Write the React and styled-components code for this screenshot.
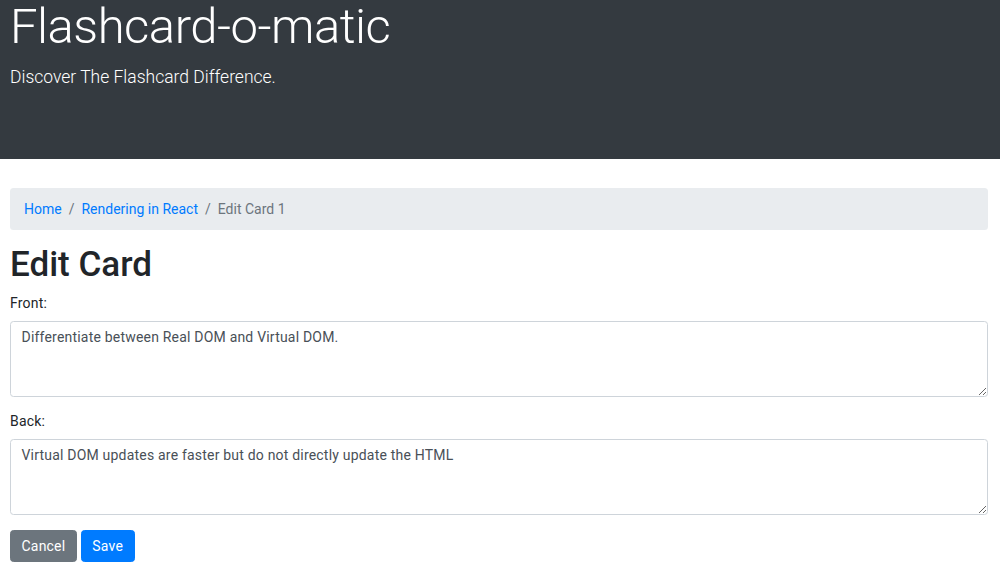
import React, { useState } from 'react';
import styled, { createGlobalStyle } from 'styled-components';

const GlobalStyle = createGlobalStyle`
  html { font-size: 14px; }
  body {
    margin: 0;
    font-family: Roboto, "Liberation Sans", sans-serif;
    font-size: 1rem;
    line-height: 1.5;
    letter-spacing: 0.2px;
    color: #212529;
    background: #fff;
  }
  * { box-sizing: border-box; }
`;

const Header = styled.header`
  background-color: #343a40;
  color: #fff;
  height: 159px;
  padding: 0 10px;
  margin-bottom: 29px;
  overflow: hidden;
`;

const Title = styled.h1`
  margin: -2px 0 7px;
  font-size: 49px;
  font-weight: 300;
  line-height: 1.2;
  letter-spacing: -0.5px;
`;

const Lead = styled.p`
  margin: 0;
  font-size: 17.5px;
  font-weight: 300;
  letter-spacing: 0;
`;

const Main = styled.main`
  padding: 0 12px 0 10px;
`;

const Crumbs = styled.ol`
  display: flex;
  list-style: none;
  margin: 0 0 14px;
  padding: 10.5px 14px;
  background-color: #e9ecef;
  border-radius: 3.5px;
  letter-spacing: 0;
`;

const Crumb = styled.li`
  color: ${(p) => (p.$active ? '#6c757d' : '#007bff')};

  &:not(:first-child)::before {
    content: '/';
    color: #6c757d;
    padding: 0 7px;
  }

  a {
    color: #007bff;
    text-decoration: none;
  }
`;

const Heading = styled.h2`
  margin: 0 0 7px;
  font-size: 35px;
  font-weight: 500;
  line-height: 1.2;
  letter-spacing: 0;
`;

const Group = styled.div`
  margin-bottom: 14px;
`;

const Label = styled.label`
  display: block;
  margin-bottom: 7px;
`;

const TextArea = styled.textarea`
  display: block;
  width: 100%;
  height: 76px;
  padding: 5.25px 10.5px;
  font-family: inherit;
  font-size: 14px;
  line-height: 1.5;
  letter-spacing: inherit;
  color: #495057;
  background: #fff;
  border: 1px solid #ced4da;
  border-radius: 3.5px;
`;

const Actions = styled.div`
  display: flex;
  gap: 4px;
  padding-top: 1px;
`;

const Button = styled.button`
  font-family: inherit;
  font-size: 14px;
  line-height: 1.5;
  letter-spacing: inherit;
  padding: 4.5px 10.5px;
  color: #fff;
  background-color: ${(p) => (p.$primary ? '#007bff' : '#6c757d')};
  border: 1px solid ${(p) => (p.$primary ? '#007bff' : '#6c757d')};
  border-radius: 3.5px;
  cursor: pointer;
`;

const App = () => {
  const [front, setFront] = useState('Differentiate between Real DOM and Virtual DOM.');
  const [back, setBack] = useState('Virtual DOM updates are faster but do not directly update the HTML');

  return (
    <>
      <GlobalStyle />
      <Header>
        <Title>Flashcard-o-matic</Title>
        <Lead>Discover The Flashcard Difference.</Lead>
      </Header>
      <Main>
        <nav>
          <Crumbs>
            <Crumb><a href="#">Home</a></Crumb>
            <Crumb><a href="#">Rendering in React</a></Crumb>
            <Crumb $active>Edit Card 1</Crumb>
          </Crumbs>
        </nav>
        <Heading>Edit Card</Heading>
        <form onSubmit={(e) => e.preventDefault()}>
          <Group>
            <Label htmlFor="front">Front:</Label>
            <TextArea id="front" value={front} onChange={(e) => setFront(e.target.value)} />
          </Group>
          <Group>
            <Label htmlFor="back">Back:</Label>
            <TextArea id="back" value={back} onChange={(e) => setBack(e.target.value)} />
          </Group>
          <Actions>
            <Button type="button">Cancel</Button>
            <Button type="submit" $primary>Save</Button>
          </Actions>
        </form>
      </Main>
    </>
  );
};

export default App;
